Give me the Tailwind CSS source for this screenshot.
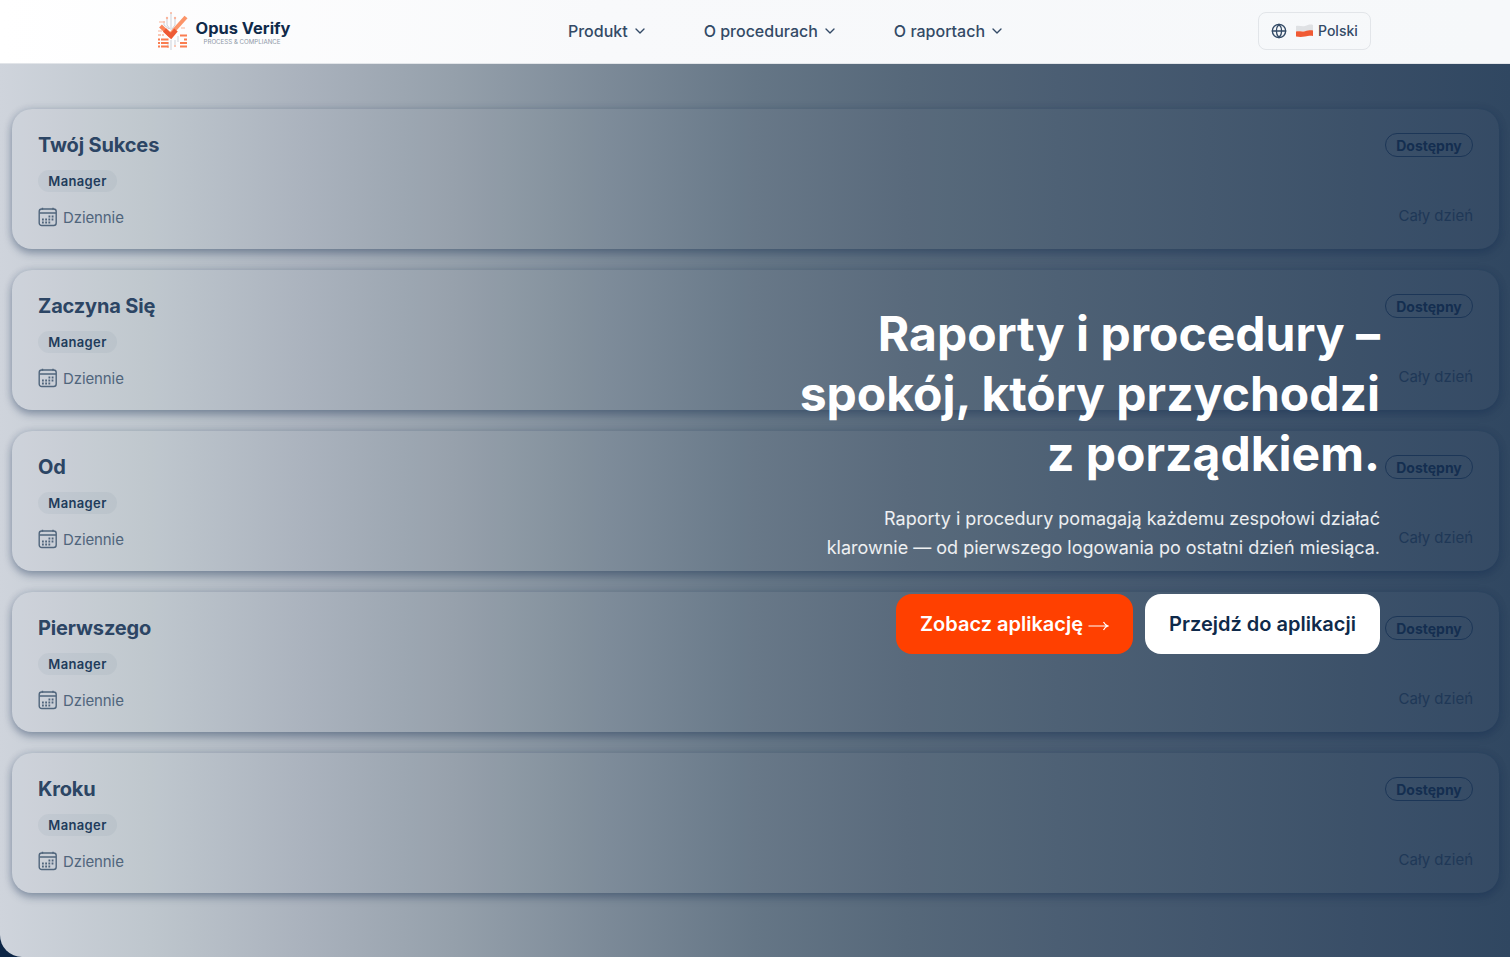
<!DOCTYPE html>
<html lang="pl">
    <head>
        <meta charset="UTF-8" />
        <meta name="viewport" content="width=device-width, initial-scale=1.0" />
        <title>Opus Verify</title>
        <script src="https://cdn.jsdelivr.net/npm/@tailwindcss/browser@4"></script>
    </head>
    <body class="bg-[#0c2545] font-['Inter',sans-serif] h-screen overflow-hidden flex flex-col">
        <header class="h-16 shrink-0 border-b border-[#e2e5e9] bg-linear-to-r from-white via-[#f8f9fb] via-40% to-[#f6f8fa]">
            <div class="w-[1280px] mx-auto h-full px-6 flex items-center justify-between">
                <a href="#" class="w-[233px]">
                    <svg class="ml-[17px] block" width="138" height="44" viewBox="0 0 138 44">
                        <g fill="none" stroke="#cdd1d8" stroke-width="1">
                            <path d="M15 3v17M11 9v6l3 4M19 9v6l-3 4M8 13v2l5 4M15 30v10M12 32v4M19 30v5M22 26v6" />
                            <path d="M3 12h4M25 18h4M2 21h4" stroke="#f9b49b" />
                        </g>
                        <g fill="#f9b49b">
                            <circle cx="15" cy="3" r="1" />
                            <circle cx="11" cy="8" r="1.200" />
                            <circle cx="19" cy="8" r="1.200" />
                            <circle cx="8" cy="12" r="1" />
                            <circle cx="19" cy="36" r="1" />
                            <circle cx="12" cy="37" r="1" />
                        </g>
                        <path d="M4.500 16l10 9.500" stroke="#fa8358" stroke-width="4" />
                        <path d="M12.500 26.500L30 7" stroke="#fb9468" stroke-width="4" />
                        <path d="M8.500 20l6.500 6 5-6" fill="none" stroke="#ee5a35" stroke-width="4.500" />
                        <path d="M2 29.500h2M5 29.500h7.500M2 33h2M5 33h7.500M2 36.500h2M5 36.500h7.500M24 25.500h7M28 29.500h3M24 33h7M24 36.500h7" stroke="#fa7d50" stroke-width="2" />
                        <path d="M2 25h3M6 25h2" stroke="#f9b49b" stroke-width="1.500" />
                        <text x="39.500" y="23.500" font-size="15.500" font-weight="700" fill="#0f2a4a" textLength="95" lengthAdjust="spacingAndGlyphs">Opus Verify</text>
                        <text x="47.500" y="33.500" font-size="5.800" fill="#8f99a7" textLength="77" lengthAdjust="spacingAndGlyphs">PROCESS &amp; COMPLIANCE</text>
                    </svg>
                </a>

                <nav class="pb-0.5 flex items-center gap-14 text-base font-medium text-[#334a66]">
                    <a href="#" class="flex items-center gap-1">
                        Produkt
                        <svg width="16" height="16" viewBox="0 0 24 24" fill="none" stroke="currentColor" stroke-width="2" stroke-linecap="round" stroke-linejoin="round"><path d="m6 9 6 6 6-6" /></svg>
                    </a>
                    <a href="#" class="flex items-center gap-1">
                        O procedurach
                        <svg width="16" height="16" viewBox="0 0 24 24" fill="none" stroke="currentColor" stroke-width="2" stroke-linecap="round" stroke-linejoin="round"><path d="m6 9 6 6 6-6" /></svg>
                    </a>
                    <a href="#" class="flex items-center gap-1">
                        O raportach
                        <svg width="16" height="16" viewBox="0 0 24 24" fill="none" stroke="currentColor" stroke-width="2" stroke-linecap="round" stroke-linejoin="round"><path d="m6 9 6 6 6-6" /></svg>
                    </a>
                </nav>

                <div class="w-[170px] flex justify-end">
                    <button class="h-[38px] w-[113px] -mt-0.5 flex items-center gap-2 px-3 rounded-lg border border-[#e2e5e9] text-sm font-medium text-[#334a66]">
                        <svg class="shrink-0" width="16" height="16" viewBox="0 0 24 24" fill="none" stroke="currentColor" stroke-width="2" stroke-linecap="round" stroke-linejoin="round"><circle cx="12" cy="12" r="10" /><path d="M12 2a14.500 14.500 0 0 0 0 20 14.500 14.500 0 0 0 0-20M2 12h20" /></svg>
                        <span class="flex items-center gap-[5px] pl-px">
                            <svg class="shrink-0" width="17" height="14" viewBox="0 0 17 14">
                                <path d="M0 2c3-1 6 1 9 0s5-2 8-1v6H0z" fill="#dfe1e4" />
                                <path d="M0 7.500c3-.5 6 .5 9-.2s5-1.300 8-.8V12c-3-.8-5 0-8 .6s-6 .6-9 0z" fill="#f05a34" />
                            </svg>
                            Polski
                        </span>
                    </button>
                </div>
            </div>
        </header>

        <section class="relative flex-1 rounded-bl-[22px] overflow-hidden bg-[linear-gradient(90deg,#cfd4dc_0%,#bec6cd_10%,#aab2bd_20%,#95a0ab_30%,#7c8a98_40%,#657686_50%,#56687a_60%,#4b5e73_70%,#42566d_80%,#394e67_90%,#304761_100%)]">
            <div id="cards" class="pt-[45px] pl-3 pr-[11px] flex flex-col gap-[21px]"></div>

            <!-- hero copy lies over the card list -->
            <div class="absolute top-[240px] right-[130px] w-[600px] flex flex-col items-end text-right text-white">
                <h1 class="text-5xl leading-[60px] font-bold whitespace-nowrap">
                    Raporty i procedury –<br />spokój, który przychodzi<br />z porządkiem.
                </h1>
                <p class="mt-5 text-lg leading-[29px] text-white/90 whitespace-nowrap">
                    Raporty i procedury pomagają każdemu zespołowi działać<br />klarownie — od pierwszego logowania po ostatni dzień miesiąca.
                </p>
                <div class="mt-8 flex gap-3 text-xl font-semibold whitespace-nowrap">
                    <a href="#" class="h-[60px] w-[237px] px-6 flex items-center justify-between rounded-2xl bg-[#ff4000]">
                        Zobacz aplikację
                        <svg class="mt-1" width="21" height="12" viewBox="0 0 21 12" fill="none" stroke="currentColor" stroke-width="1.200"><path d="M.5 6h19.500M15.500 2c1 2 2.300 3.300 4.500 4-2.200.7-3.500 2-4.500 4" /></svg>
                    </a>
                    <a href="#" class="h-[60px] w-[235px] flex items-center justify-center rounded-2xl bg-white text-[#0f2a4a]">Przejdź do aplikacji</a>
                </div>
            </div>
        </section>

        <template id="card">
            <article class="h-[140px] rounded-[20px] px-[26px] flex justify-between bg-white/2 shadow-[0_4px_8px_rgba(20,45,80,0.36),0_0_8px_rgba(20,45,80,0.12)]">
                <div class="pt-[21px]">
                    <h2 class="text-xl leading-[30px] font-bold tracking-[-0.15px] text-[#2c4564]"></h2>
                    <span class="mt-[10px] w-[79px] h-[22px] pt-px flex items-center justify-center rounded-full bg-[#2c4665]/5 text-[13px] font-semibold tracking-[0.35px] text-[#213b5b]">Manager</span>
                    <div class="mt-[15px] flex items-center gap-[5px] text-[15px] leading-[22px] tracking-[-0.1px] text-[#50657c]">
                        <svg class="-mt-0.5" width="20" height="20" viewBox="0 0 20 20" fill="none" stroke="currentColor" stroke-width="1.400">
                            <rect x="1.200" y="2" width="17" height="16.500" rx="2.500" />
                            <path d="M1.500 6h16.500M4.500 .8v2M15 .8v2" />
                            <path d="M10.500 9.500h6M4 12.500h12.500M4 15.500h9" stroke-width="1.800" stroke-dasharray="1.800 1.400" />
                        </svg>
                        Dziennie
                    </div>
                </div>
                <div class="pt-6 flex flex-col items-end">
                    <span class="w-[88px] h-6 pt-px flex items-center justify-center rounded-full border border-[#1c3657] text-sm font-bold text-[#142e50]">Dostępny</span>
                    <span class="mt-[48px] text-[15px] leading-[22px] text-[#1f3857]">Cały dzień</span>
                </div>
            </article>
        </template>

        <script>
            const cards = document.getElementById("cards");
            const template = document.getElementById("card");

            ["Twój Sukces", "Zaczyna Się", "Od", "Pierwszego", "Kroku"].forEach((title) => {
                const card = template.content.cloneNode(true);
                card.querySelector("h2").textContent = title;
                cards.appendChild(card);
            });
        </script>
    </body>
</html>
